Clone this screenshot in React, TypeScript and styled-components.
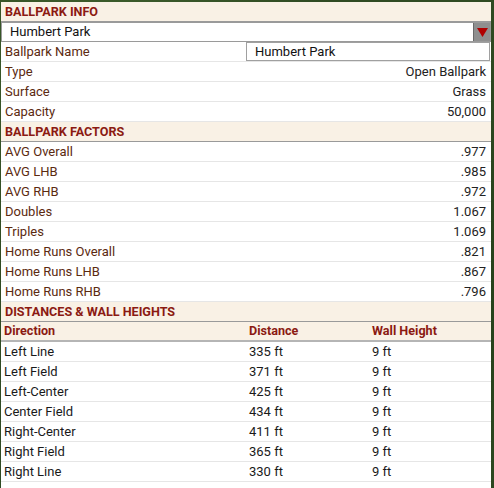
import styled, { createGlobalStyle } from "styled-components";

const GlobalStyle = createGlobalStyle`
    html, body {
        margin: 0;
        padding: 0;
        background: #2f4a22;
    }
    body {
        font-family: Roboto, "Noto Sans", sans-serif;
        font-size: 13px;
    }
`;

const Backdrop = styled.div`
    width: 494px;
    height: 488px;
    padding: 2px 3px 0 1px;
    box-sizing: border-box;
    background:
        radial-gradient(circle at 20% 10%, #3e5e2c 0, transparent 40%),
        radial-gradient(circle at 90% 60%, #25401a 0, transparent 50%),
        #2f4a22;
    overflow: hidden;
`;

const Panel = styled.div`
    background: #fff;
    height: 100%;
    display: flex;
    flex-direction: column;
`;

const SectionHeader = styled.div`
    height: 19px;
    line-height: 19px;
    padding: 0 4px;
    background: #f9f1e5;
    color: #8b1a12;
    font-weight: 700;
    font-size: 12.6px;
    border-bottom: 1px solid #9a9a9a;
`;

const Select = styled.div`
    display: flex;
    height: 18px;
    border: 1px solid #9a9a9a;
    background: #fff;
`;

const SelectValue = styled.div`
    flex: 1;
    line-height: 18px;
    padding-left: 8px;
    color: #111;
`;

const SelectArrow = styled.div`
    width: 16px;
    background: #8f8f8f;
    border-left: 1px solid #6a6a6a;
    display: flex;
    align-items: center;
    justify-content: center;
`;

const Row = styled.div`
    display: flex;
    align-items: center;
    height: 19px;
    padding: 0 5px 0 4px;
    border-bottom: 1px solid #e6e6e6;
`;

const Label = styled.span`
    flex: 1;
    color: #5b2a10;
`;

const Value = styled.span`
    color: #222;
`;

const NameInput = styled.div`
    width: 234px;
    height: 17px;
    line-height: 17px;
    border: 1px solid #a0a0a0;
    padding-left: 8px;
    margin-right: -4px;
    color: #111;
`;

const TableRow = styled.div<{ $head?: boolean }>`
    display: grid;
    grid-template-columns: 245px 123px 1fr;
    height: ${(p) => (p.$head ? "18px" : "19px")};
    line-height: ${(p) => (p.$head ? "18px" : "19px")};
    padding-left: 3px;
    background: ${(p) => (p.$head ? "#f9f1e5" : "#fff")};
    color: ${(p) => (p.$head ? "#8b1a12" : "#1a1a1a")};
    font-weight: ${(p) => (p.$head ? 700 : 400)};
    font-size: ${(p) => (p.$head ? "12.6px" : "13px")};
    border-bottom: ${(p) => (p.$head ? "2px solid #b5b5b5" : "1px solid #e6e6e6")};
`;

const info = [
    ["Type", "Open Ballpark"],
    ["Surface", "Grass"],
    ["Capacity", "50,000"],
];

const factors = [
    ["AVG Overall", ".977"],
    ["AVG LHB", ".985"],
    ["AVG RHB", ".972"],
    ["Doubles", "1.067"],
    ["Triples", "1.069"],
    ["Home Runs Overall", ".821"],
    ["Home Runs LHB", ".867"],
    ["Home Runs RHB", ".796"],
];

const distances = [
    ["Left Line", "335 ft", "9 ft"],
    ["Left Field", "371 ft", "9 ft"],
    ["Left-Center", "425 ft", "9 ft"],
    ["Center Field", "434 ft", "9 ft"],
    ["Right-Center", "411 ft", "9 ft"],
    ["Right Field", "365 ft", "9 ft"],
    ["Right Line", "330 ft", "9 ft"],
];

export default function App() {
    return (
        <>
            <GlobalStyle />
            <Backdrop>
                <Panel>
                    <SectionHeader>BALLPARK INFO</SectionHeader>
                    <Select>
                        <SelectValue>Humbert Park</SelectValue>
                        <SelectArrow>
                            <svg width="11" height="9" viewBox="0 0 11 9">
                                <path d="M0 0h11L5.5 9z" fill="#b00000" />
                            </svg>
                        </SelectArrow>
                    </Select>
                    <Row>
                        <Label>Ballpark Name</Label>
                        <NameInput>Humbert Park</NameInput>
                    </Row>
                    {info.map(([k, v]) => (
                        <Row key={k}>
                            <Label>{k}</Label>
                            <Value>{v}</Value>
                        </Row>
                    ))}
                    <SectionHeader>BALLPARK FACTORS</SectionHeader>
                    {factors.map(([k, v]) => (
                        <Row key={k}>
                            <Label>{k}</Label>
                            <Value>{v}</Value>
                        </Row>
                    ))}
                    <SectionHeader>DISTANCES &amp; WALL HEIGHTS</SectionHeader>
                    <TableRow $head>
                        <span>Direction</span>
                        <span>Distance</span>
                        <span>Wall Height</span>
                    </TableRow>
                    {distances.map(([d, dist, h]) => (
                        <TableRow key={d}>
                            <span>{d}</span>
                            <span>{dist}</span>
                            <span>{h}</span>
                        </TableRow>
                    ))}
                </Panel>
            </Backdrop>
        </>
    );
}
